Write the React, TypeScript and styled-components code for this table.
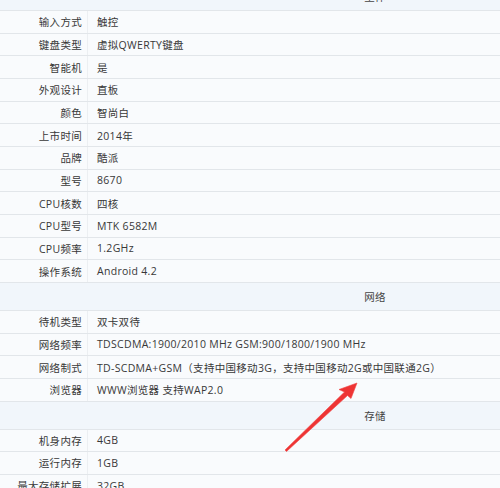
import styled, { createGlobalStyle } from "styled-components";

type Item = { label: string; value: string };
type Section = { title: string; items: Item[] };

const specs: Section[] = [
  {
    title: "主体",
    items: [
      { label: "输入方式", value: "触控" },
      { label: "键盘类型", value: "虚拟QWERTY键盘" },
      { label: "智能机", value: "是" },
      { label: "外观设计", value: "直板" },
      { label: "颜色", value: "智尚白" },
      { label: "上市时间", value: "2014年" },
      { label: "品牌", value: "酷派" },
      { label: "型号", value: "8670" },
      { label: "CPU核数", value: "四核" },
      { label: "CPU型号", value: "MTK 6582M" },
      { label: "CPU频率", value: "1.2GHz" },
      { label: "操作系统", value: "Android 4.2" },
    ],
  },
  {
    title: "网络",
    items: [
      { label: "待机类型", value: "双卡双待" },
      { label: "网络频率", value: "TDSCDMA:1900/2010 MHz GSM:900/1800/1900 MHz" },
      {
        label: "网络制式",
        value: "TD-SCDMA+GSM（支持中国移动3G，支持中国移动2G或中国联通2G）",
      },
      { label: "浏览器", value: "WWW浏览器 支持WAP2.0" },
    ],
  },
  {
    title: "存储",
    items: [
      { label: "机身内存", value: "4GB" },
      { label: "运行内存", value: "1GB" },
      { label: "最大存储扩展", value: "32GB" },
    ],
  },
];

const App = () => {
  return (
    <>
      <GlobalStyle />
      <Page>
        <Table>
          {specs.map((section) => (
            <div key={section.title}>
              <Header>{section.title}</Header>
              {section.items.map((item) => (
                <Row key={item.label}>
                  <Label>{item.label}</Label>
                  <Value>{item.value}</Value>
                </Row>
              ))}
            </div>
          ))}
        </Table>
        {/* red annotation arrow pointing at the network row */}
        <Arrow viewBox="0 0 100 90">
          <path
            d="M3 79 L62.5 21 L57 18.5 L75 12 L69 27.5 L65.5 24.5 L4.5 80.5 Z"
            fill="#ee3434"
            stroke="#f04545"
            strokeWidth="0.6"
            strokeLinejoin="round"
          />
        </Arrow>
      </Page>
    </>
  );
};

export default App;

const GlobalStyle = createGlobalStyle`
  html, body {
    margin: 0;
    padding: 0;
    background: #f9fbfd;
  }
`;

const Page = styled.div`
  position: relative;
  width: 500px;
  height: 488px;
  overflow: hidden;
  font-family: "Open Sans", "Noto Sans CJK SC", sans-serif;
  font-size: 10.5px;
  letter-spacing: 0.3px;
  color: #383838;
`;

const Table = styled.div`
  width: 750px;
  margin-top: -17px;
  display: flex;
  flex-direction: column;
`;

const Header = styled.div`
  height: 28px;
  box-sizing: border-box;
  display: flex;
  align-items: center;
  justify-content: center;
  background: #f1f6fb;
  border-bottom: 1px solid #e2e6ea;
  color: #444;
`;

const Row = styled.div`
  height: 22.67px;
  box-sizing: border-box;
  display: grid;
  grid-template-columns: 88px 1fr;
  border-bottom: 1px solid #e2e6ea;
  background: #f9fbfd;
`;

const Label = styled.div`
  display: flex;
  align-items: center;
  justify-content: flex-end;
  padding-right: 5px;
  white-space: nowrap;
  border-right: 1px solid #eceff2;
`;

const Value = styled.div`
  display: flex;
  align-items: center;
  padding-left: 9px;
  white-space: nowrap;
`;

const Arrow = styled.svg`
  position: absolute;
  left: 282px;
  top: 371px;
  width: 100px;
  height: 90px;
`;
